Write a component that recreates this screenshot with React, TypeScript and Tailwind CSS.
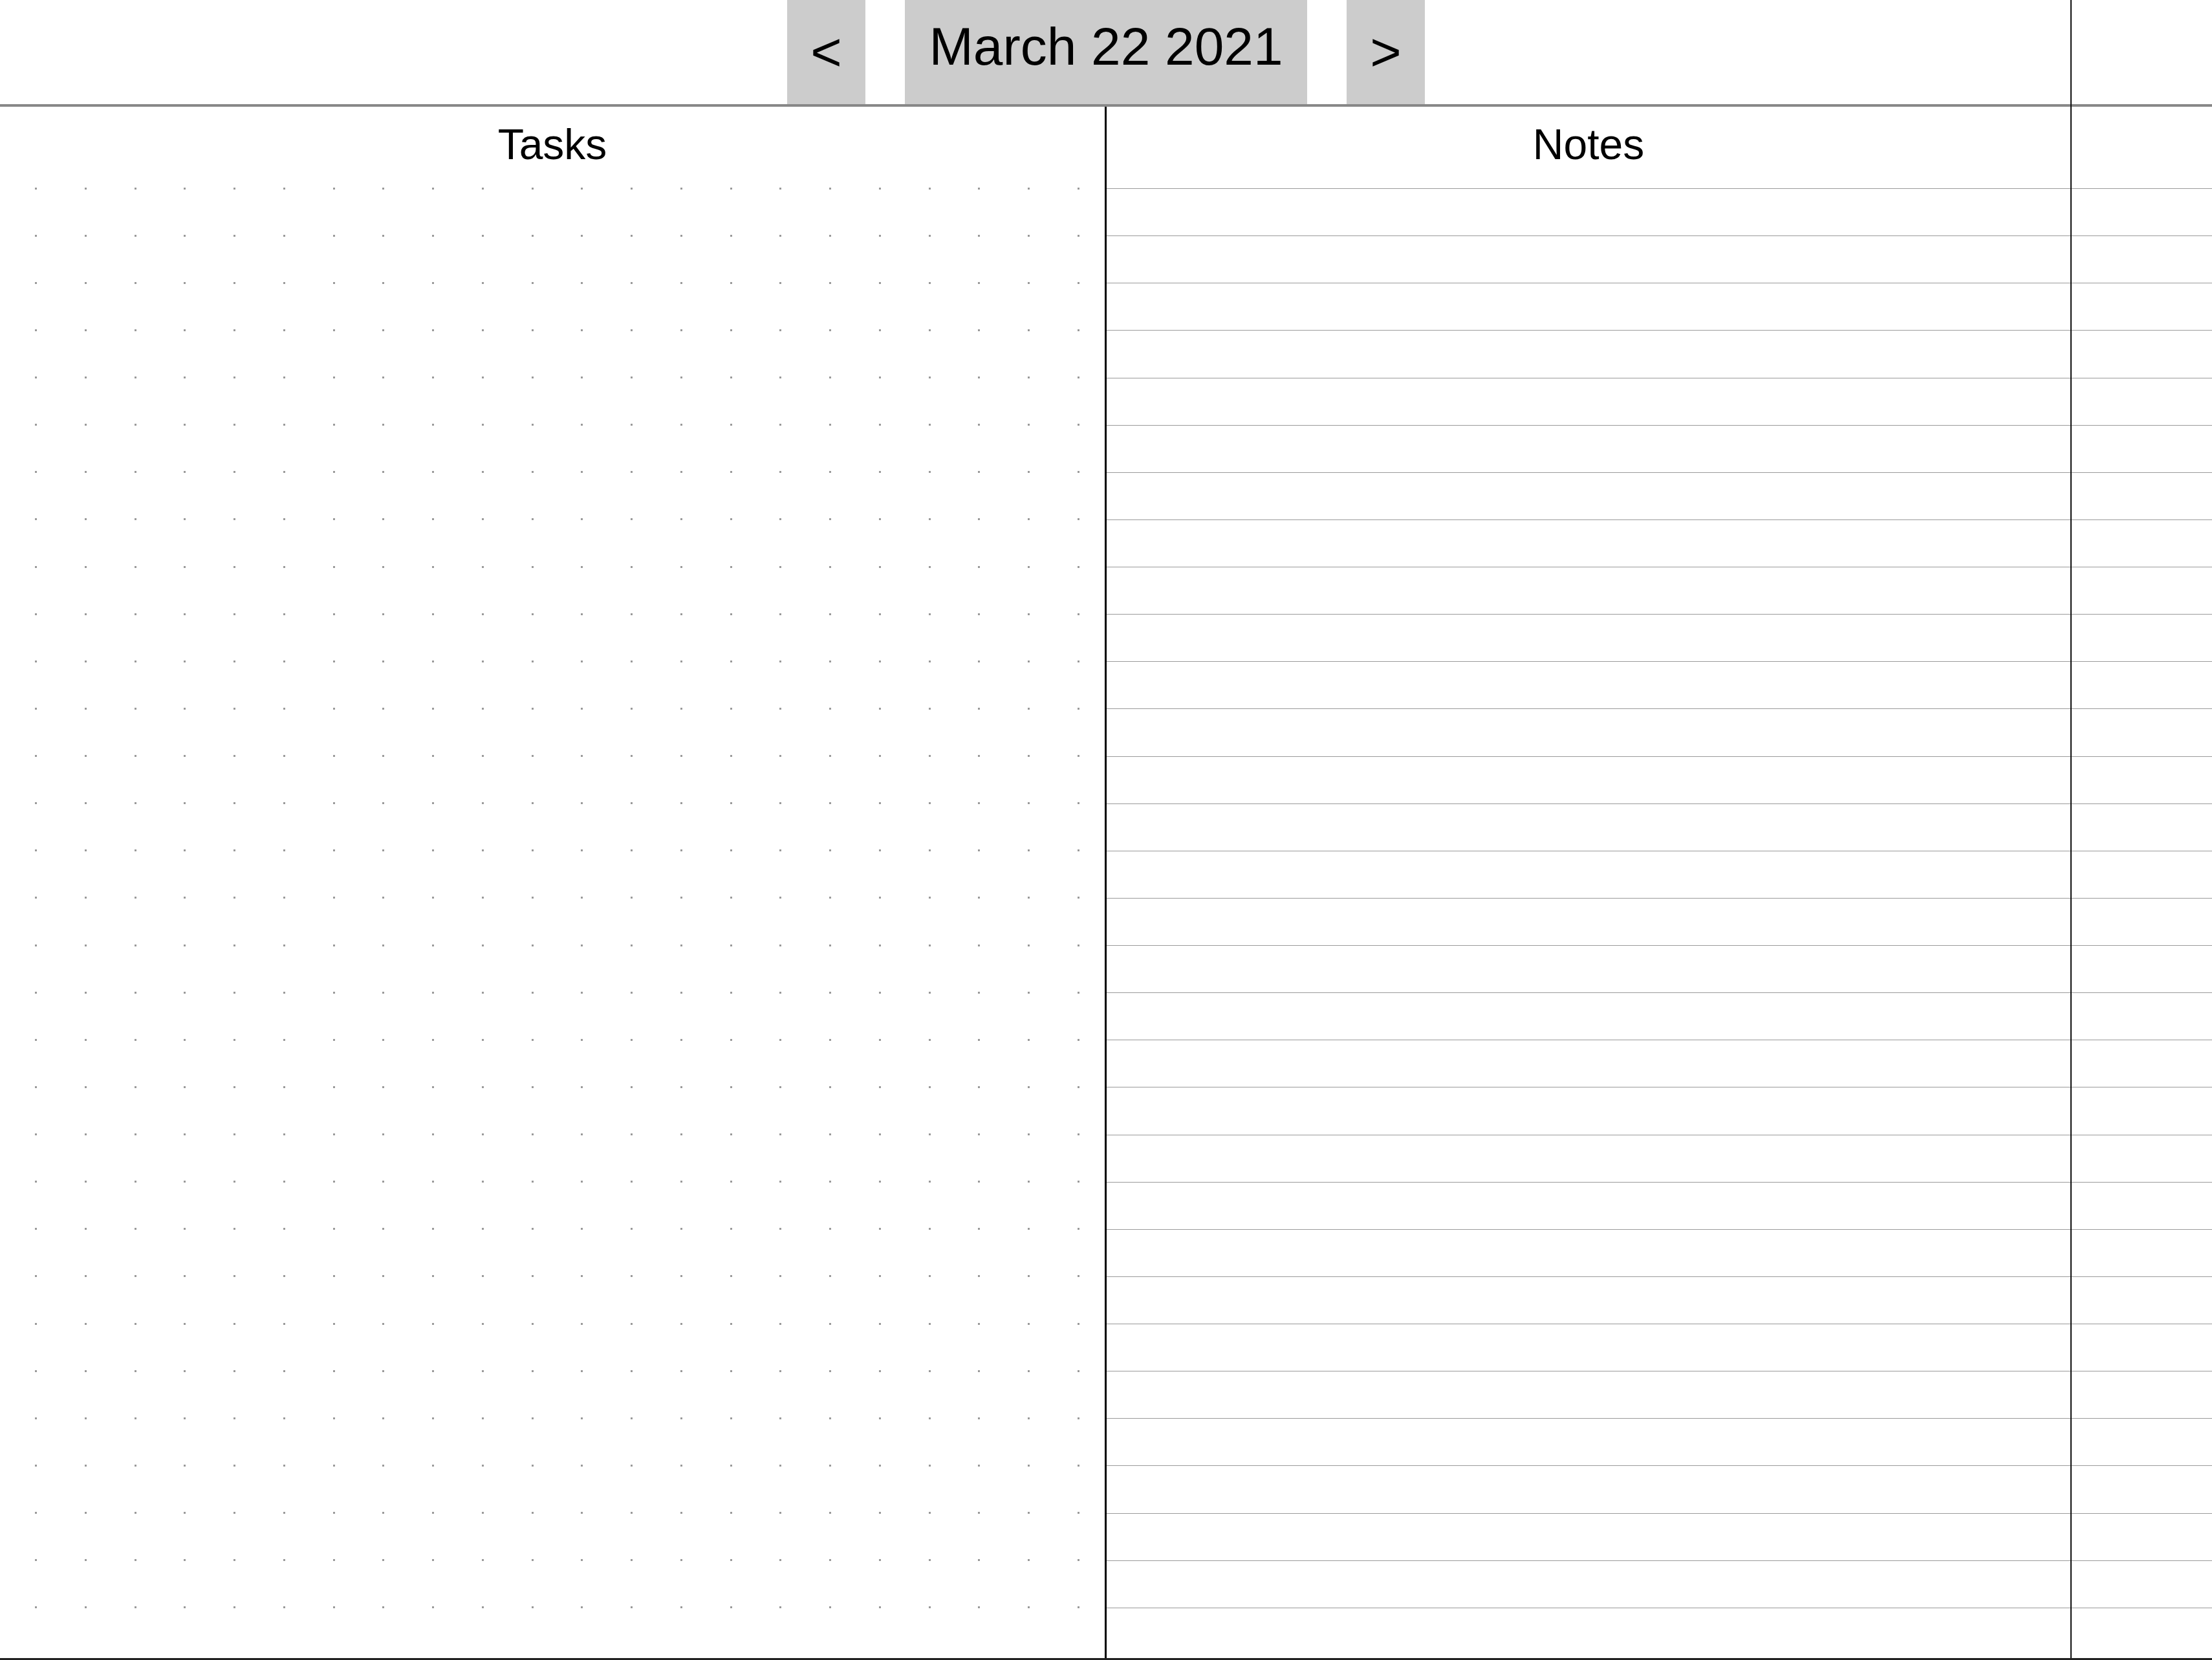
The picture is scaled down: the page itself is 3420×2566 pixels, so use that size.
import React from "react";

const ROWS = Array.from({ length: 31 }, (_, i) => i);
const DOTS = Array.from({ length: 22 }, (_, i) => i);

function LinedRows() {
  return (
    <div className="flex flex-col">
      {ROWS.map((r) => (
        <div key={r} className="h-[73.13px] border-t border-[#9a9a9a]" />
      ))}
    </div>
  );
}

export default function App() {
  return (
    <div className="h-[2566px] w-[3420px] overflow-hidden bg-white text-black font-['Liberation_Sans',Arial,sans-serif] border-b-[3px] border-[#222]">
      <div className="flex h-full">
        {/* main area */}
        <div className="w-[3201px] flex flex-col shrink-0">
          {/* header */}
          <div className="h-[165px] border-b-4 border-[#888] flex justify-center pl-[219px]">
            <div className="flex h-[161px] gap-[61px]">
              <div className="w-[121px] h-[161px] bg-[#cccccc] flex items-center justify-center text-[83px] leading-none">
                &lt;
              </div>
              <div className="w-[622px] h-[161px] bg-[#cccccc] flex justify-center pt-[31px] text-[82px] leading-none">
                March 22 2021
              </div>
              <div className="w-[121px] h-[161px] bg-[#cccccc] flex items-center justify-center text-[83px] leading-none">
                &gt;
              </div>
            </div>
          </div>
          {/* body */}
          <div className="flex flex-1">
            {/* tasks */}
            <div className="w-[1708px] shrink-0 flex flex-col">
              <div className="h-[126px] pt-[25px] text-center text-[66px] leading-none">Tasks</div>
              <div className="flex flex-col">
                {ROWS.map((r) => (
                  <div key={r} className="h-[73.13px]">
                    <div className="flex justify-between pl-[54px] pr-[39px] -mt-[1.5px]">
                      {DOTS.map((d) => (
                        <div key={d} className="w-[3px] h-[3px] bg-[#9a9a9a]" />
                      ))}
                    </div>
                  </div>
                ))}
              </div>
            </div>
            <div className="w-[3px] shrink-0 bg-black" />
            {/* notes */}
            <div className="flex-1 flex flex-col">
              <div className="h-[126px] pt-[25px] text-center text-[66px] leading-none">Notes</div>
              <LinedRows />
            </div>
          </div>
        </div>
        <div className="w-[2px] shrink-0 bg-[#111]" />
        {/* right column */}
        <div className="flex-1 flex flex-col">
          <div className="h-[165px] border-b-4 border-[#888]" />
          <div className="h-[126px]" />
          <LinedRows />
        </div>
      </div>
    </div>
  );
}
